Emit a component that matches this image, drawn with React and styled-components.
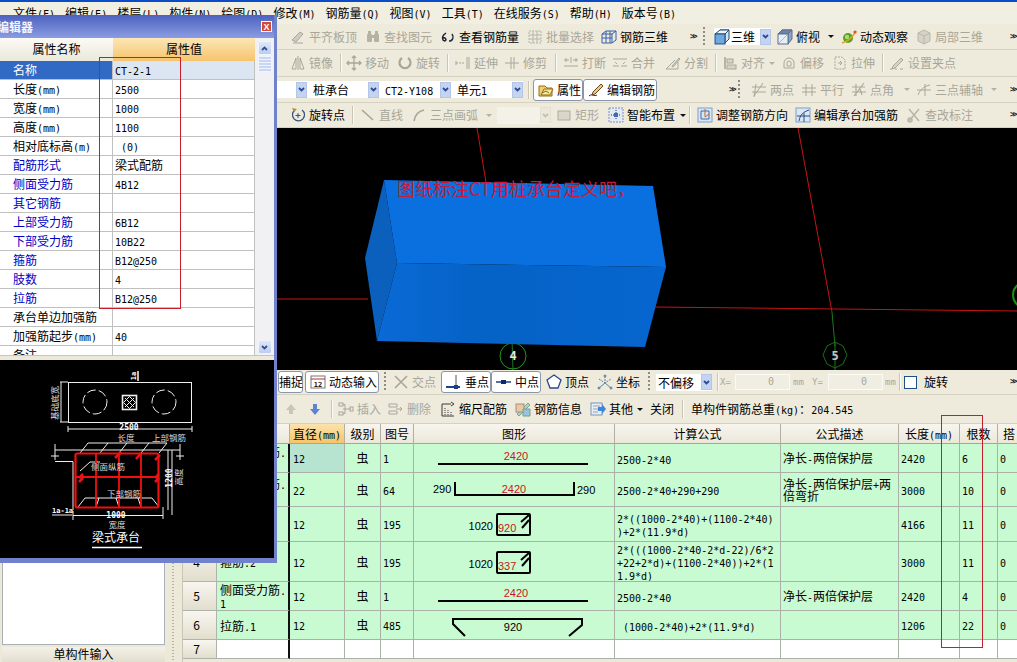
import React from "react";
import styled, { createGlobalStyle } from "styled-components";

const CJK = `"Noto Sans CJK SC", "Noto Sans", sans-serif`;
const MONO = `"DejaVu Sans Mono", "Liberation Mono", monospace`;

const Global = createGlobalStyle`
  html, body { margin: 0; padding: 0; background: #ece9d8; }
  body { font-family: ${CJK}; font-size: 12px; color: #000; }
`;

const Lat = styled.span`font-family: ${MONO}; font-size: 10px; line-height: 1;`;
const T = ({ s }) => String(s).split(/([\x00-\x7f]+)/).map((p, i) => (i % 2 ? <Lat key={i}>{p}</Lat> : p));

const Page = styled.div`
  position: relative; width: 1017px; height: 662px; overflow: hidden;
  background: #ece9d8; display: flex; flex-direction: column;
`;
const BlueStrip = styled.div`height: 2px; background: #0a4cc8; flex: none;`;
const MenuBar = styled.div`
  height: 22px; display: flex; align-items: center; gap: 10px; padding-left: 13px;
  background: #f1eee2; line-height: 22px; flex: none;
`;
const RowBox = styled.div`
  height: ${p => p.$h}px; flex: none; display: flex; align-items: center; white-space: nowrap;
  padding-left: ${p => p.$pad}px; background: #eeebdd; border-bottom: 1px solid #d6d2c2; box-sizing: border-box;
  line-height: 16px; overflow: hidden;
`;
const Slot = styled.div`
  flex: none; width: ${p => p.$w}px; height: 100%; display: flex; align-items: center;
`;
const ItemBox = styled.div`
  display: flex; align-items: center; gap: 3px; color: ${p => (p.$dim ? "#a9a698" : "#000")};
`;
const IconBox = styled.svg`width: 16px; height: 16px; flex: none; display: block;`;
const SepLine = styled.div`width: 1px; height: 18px; background: #c9c5b4; border-right: 1px solid #fbfaf4;`;
const ChevMark = styled.span`font-family: ${MONO}; font-size: 8px; font-weight: 700; letter-spacing: -2px; color: #222;`;
const GripMark = styled.div`
  width: 2px; height: 20px;
  background: repeating-linear-gradient(to bottom, #8f8c7d 0 2px, transparent 2px 4px);
`;
const CaretMark = styled.div`
  width: 0; height: 0; border-left: 3px solid transparent; border-right: 3px solid transparent;
  border-top: 3px solid ${p => (p.$dim ? "#b5b2a4" : "#111")};
`;
const ComboBox = styled.div`
  width: ${p => p.$w}px; height: 17px; background: ${p => (p.$dim ? "#f3f1e8" : "#fff")};
  display: flex; align-items: center; justify-content: space-between; padding-left: ${p => p.$pad ?? 6}px;
  box-sizing: border-box; line-height: 17px;
`;
const ComboArrow = styled.div`
  width: 11px; height: 16px; flex: none; display: flex; align-items: center; justify-content: center;
  background: ${p => (p.$dim ? "#ebe8da" : "#c3d3f0")}; border: 1px solid ${p => (p.$dim ? "#e3e0d2" : "#b3c6ea")};
  box-sizing: border-box;
  color: ${p => (p.$dim ? "#c4c1b2" : "#2a4c96")};
`;
const TogBtn = styled.div`
  width: ${p => p.$w}px; height: 22px; box-sizing: border-box; background: #fff; border: 1px solid #8a96a8;
  border-radius: 3px; display: flex; align-items: center; padding-left: 4px; gap: 3px;
`;
const SpinBox = styled.div`
  width: 55px; height: 16px; box-sizing: border-box; background: #f0eee2; border: 1px solid #fbfaf4;
  display: flex; align-items: center; justify-content: flex-end; color: #aca899; padding-right: 15px;
`;
const SmallDim = styled.span`font-family: ${MONO}; font-size: 9px; color: #a9a698;`;
const CheckBox = styled.div`width: 13px; height: 13px; box-sizing: border-box; border: 1px solid #1f4f80; background: #fff;`;
const TightLabel = styled.span`margin-left: ${p => p.$ml}px;`;

const Chevron = () => (
  <svg width="7" height="5" viewBox="0 0 7 5"><path d="M1 1l2.5 2.5L6 1" fill="none" stroke="currentColor" strokeWidth="1.8" /></svg>
);

const ic = {
  flush: <g stroke="#aaa79a" fill="#cfccc0"><path d="M2 11l8-8 3 2-7 8z" /><path d="M3 14h10" fill="none" /></g>,
  binoc: <g fill="#b5b2a4"><rect x="2" y="5" width="5" height="8" rx="1" /><rect x="9" y="5" width="5" height="8" rx="1" /><rect x="6" y="6" width="4" height="3" /><rect x="3" y="2" width="3" height="3" /><rect x="10" y="2" width="3" height="3" /></g>,
  view: <g fill="none" stroke="#223" strokeWidth="1.5"><path d="M6 4C3 6 2 9 3 11c2 2 4 0 2-2-1-.6-2 0-2.6 1" /><path d="M12 5c2 3 1 7-3 7" stroke="#234" /></g>,
  batch: <g fill="none" stroke="#b6b4a8"><rect x="2" y="2" width="12" height="12" strokeDasharray="2 1" /><path d="M2 6h12M2 10h12M6 2v12M10 2v12" /></g>,
  rebar3d: <g fill="none" stroke="#3560a8"><path d="M1 5l4-3h10v9l-4 3H1z" /><path d="M1 9h10M5 2v12M9 2v12M11 5v9M1 5h10l4-3" /></g>,
  cube: <g stroke="#1e4a78"><path d="M6 1h9v9l-4 4V5z" fill="#d8e6f6" /><path d="M1 5l5-4h9l-4 4z" fill="#eef4fb" /><rect x="1" y="5" width="10" height="10" fill="#6ea8dc" /></g>,
  cubeT: <g stroke="#5a6c8c"><path d="M5 1h10v9l-4 5V5z" fill="#8da4c6" /><path d="M1 5l4-4h10l-4 4z" fill="#6d84aa" /><rect x="1" y="5" width="10" height="10" fill="#e6eff8" /><path d="M2 14l8-8" stroke="#9db8d8" /></g>,
  orbit: <g><circle cx="7" cy="9" r="5" fill="#5aa02c" /><circle cx="6" cy="8" r="2.2" fill="#a9dc6a" /><path d="M1 14C6 13 12 8 15 2" fill="none" stroke="#d9a520" strokeWidth="1.6" /><circle cx="14" cy="3" r="1.6" fill="#e8502a" /></g>,
  local3d: <g fill="#d6d3c7" stroke="#bab7a9"><path d="M8 1l6 3v8l-6 3-6-3V4z" /><path d="M2 4l6 3 6-3M8 7v8" fill="none" /></g>,
  mirror: <g fill="none" stroke="#a9a698"><path d="M6 3L2 14h4zM10 3l4 11h-4z" /><path d="M8 1v14" /></g>,
  move: <g fill="none" stroke="#a9a698" strokeWidth="1.3"><path d="M8 1v14M1 8h14M6 3l2-2 2 2M6 13l2 2 2-2M3 6L1 8l2 2M13 6l2 2-2 2" /></g>,
  rotate: <g fill="none" stroke="#a9a698" strokeWidth="2.2"><path d="M5 3a5.5 5.5 0 1 0 6 0" /></g>,
  extend: <g fill="none" stroke="#a9a698"><path d="M1 8h9" strokeDasharray="2 1" /><path d="M12 2v12M14 2v12" /><path d="M1 6v4" /></g>,
  trim: <g fill="none" stroke="#a9a698"><path d="M1 8h14" /><path d="M7 2v12M10 2v12" /></g>,
  cut: <g fill="none" stroke="#a9a698"><path d="M1 5h5M10 5h5M1 11h14" /><path d="M8 2v6" /><path d="M3 3v4M13 3v4" /></g>,
  join: <g fill="none" stroke="#a9a698"><path d="M1 4h14M1 11h6M9 11h6M3 7l2 2M13 7l-2 2" /></g>,
  split: <g fill="none" stroke="#a9a698"><path d="M1 14h12V7M1 14l9-9" /><path d="M8 10l6-7 1 1-6 7-2 1z" fill="#d6d3c7" /></g>,
  align: <g fill="none" stroke="#a9a698"><path d="M3 2v12" strokeWidth="1.6" /><rect x="5" y="4" width="6" height="4" fill="#d6d3c7" /><rect x="5" y="10" width="9" height="4" fill="#d6d3c7" /></g>,
  offset: <g fill="none" stroke="#a9a698"><path d="M3 13V8a5 5 0 0 1 10 0v5z" /><path d="M6 11V8a2 2 0 0 1 4 0v3z" /></g>,
  stretch: <g fill="none" stroke="#a9a698"><path d="M3 2h7l3 3v9H3z" strokeDasharray="2 1" /><path d="M6 8h4M8 10l2-2-2-2" /></g>,
  grip: <g fill="none" stroke="#a9a698"><path d="M1 14h2M6 14h2M11 14h3" /><path d="M4 11l8-8 2 2-8 8-3 1z" fill="#d6d3c7" /></g>,
  attr: <g stroke="#9a6a14"><path d="M1 4h6l2 2h5v8H1z" fill="#f2cf72" /><path d="M3 13l3-6h9l-3 6z" fill="#fbe69a" /><path d="M4 11l4-2 3 2" fill="none" stroke="#5a7a2a" /></g>,
  pencil: <g><path d="M1 14c3-3 5 1 8-1" fill="none" stroke="#333" /><path d="M5 10l8-8 2 2-8 8-3 1z" fill="#e8c88a" stroke="#6a4a1a" /></g>,
  two: <g fill="none" stroke="#a9a698"><path d="M1 5h14M1 10h14M5 2l-2 13M12 1L3 14" /></g>,
  para: <g fill="none" stroke="#a9a698"><path d="M1 6h14M1 10h14M5 2v12M11 2v12" /></g>,
  angle: <g fill="none" stroke="#a9a698"><path d="M1 5h13M1 10h14M5 2v12M13 1L3 14M9 7l2 6" strokeWidth="1.1" /></g>,
  axis3: <g fill="none" stroke="#a9a698"><path d="M2 13C4 8 8 4 14 3" /><path d="M1 8h14M9 2v12" /></g>,
  rotPt: <g fill="none"><path d="M5 3a6 6 0 1 0 7 0" stroke="#32507c" strokeWidth="1.2" /><path d="M8 6v5M5.5 8.5h5" stroke="#32507c" /><path d="M2 1l5 1-3 3z" fill="#b08f4c" /></g>,
  line: <g fill="none" stroke="#a9a698" strokeWidth="1.6"><path d="M2 3l11 10" /></g>,
  arc: <g fill="none" stroke="#a9a698" strokeWidth="1.6"><path d="M3 14C4 8 8 4 13 3" /></g>,
  rect: <rect x="2" y="4" width="12" height="9" fill="#dad7ca" stroke="#b0ad9f" />,
  smart: <g><rect x="1" y="1" width="14" height="14" fill="#e3eaf5" stroke="#7d90b4" strokeDasharray="2 1" /><path d="M8 3v10M3 8h10" stroke="#1f3f7f" strokeDasharray="1 1" /><rect x="6" y="6" width="4" height="4" fill="#406cb0" /></g>,
  dir: <g><rect x="1" y="1" width="14" height="14" fill="#d8e6f4" stroke="#7fa0c8" /><path d="M4 4h8v8H4z" fill="none" stroke="#3c6ca8" /><path d="M8 2v8l4-3" fill="none" stroke="#c06a2a" /></g>,
  cap: <g><rect x="1" y="1" width="14" height="14" fill="#dbe7f5" stroke="#7fa0c8" /><path d="M14 3C8 5 5 8 4 14M2 9h13M9 6v9" fill="none" stroke="#2c4c80" /></g>,
  fix: <g fill="none" stroke="#b9b6a8" strokeWidth="1.6"><path d="M3 2l10 12M13 2L3 14" /><circle cx="4" cy="13" r="2" /></g>,
  dyn: <g><rect x="1" y="2" width="14" height="12" fill="#fff" stroke="#777" /><path d="M1 5h14" stroke="#a33" /><text x="8" y="12.5" fontSize="7" fontFamily={MONO} fontWeight="700" textAnchor="middle" fill="#222">12</text></g>,
  cross: <g fill="none" stroke="#a9a698" strokeWidth="1.6"><path d="M2 2l12 12M14 2L2 14" /></g>,
  perp: <g><path d="M0 13h14" stroke="#1d3f8c" strokeWidth="2" /><path d="M10 1v12" stroke="#555" /><rect x="8" y="11" width="4" height="4" fill="#1d3f8c" /></g>,
  mid: <g><path d="M0 8h15" stroke="#1d3f8c" strokeWidth="1.5" /><rect x="5" y="6" width="5" height="4" fill="#0d2a6c" /></g>,
  vert: <path d="M8 1l7 5-3 8H4L1 6z" fill="#fff" stroke="#2a4a8c" strokeWidth="1.3" />,
  coord: <g fill="none" stroke="#5a80a8"><path d="M2 14l6-5 6 5" /><path d="M8 2v7M2 5l6 4 6-4" strokeDasharray="2 1" /><circle cx="8" cy="2" r="1" fill="#cfa13a" /><circle cx="2" cy="14" r="1" fill="#cfa13a" /><circle cx="14" cy="14" r="1" fill="#cfa13a" /></g>,
  up: <path d="M8 3l5 6h-3v4H6V9H3z" fill="#c9c6b8" />,
  down: <path d="M6 3h4v5h3l-5 6-5-6h3z" fill="#5e84d0" />,
  ins: <g fill="none" stroke="#a9a698"><rect x="1" y="2" width="4" height="3" /><rect x="1" y="11" width="4" height="3" /><path d="M5 8h8M5 3.5h2v9H5" /><rect x="12" y="6" width="3" height="4" /></g>,
  del: <g fill="none" stroke="#a9a698"><path d="M1 3h8v3H1zM1 10h8v3H1zM8 8h6M12 6l2 2-2 2" /></g>,
  scale: <g fill="none" stroke="#3a3a3a"><path d="M2 3v12h12" /><path d="M5 7v7M8 9v5M11 11v3" strokeDasharray="1 1" /><path d="M2 3h9" /><path d="M11 1l3 2-3 2" /></g>,
  info: <g><path d="M2 13L13 2l2 2L4 15z" fill="#b9c9de" stroke="#7a7" /><rect x="1" y="3" width="8" height="8" fill="#e8c9a0" stroke="#a88" /><path d="M8 8h7v7H8z" fill="#9cc0e2" stroke="#6a8" /></g>,
  other: <g><rect x="1" y="2" width="11" height="12" fill="#e8eef7" stroke="#7b93b8" /><path d="M3 5h7M3 8h5M3 11h5" stroke="#8aa" /><path d="M8 6h4V3l4 5-4 5v-3H8z" fill="#3f86d8" /></g>
};

const Icon = ({ n }) => <IconBox viewBox="0 0 16 16">{ic[n]}</IconBox>;

const I = (n, label, dim) => (
  <ItemBox $dim={dim}>
    <Icon n={n} />
    <span><T s={label} /></span>
  </ItemBox>
);
const Sep = <SepLine />;
const Chev = <ChevMark>{">>"}</ChevMark>;
const Grip = <GripMark />;
const Caret = <CaretMark />;
const CaretD = <CaretMark $dim />;
const Combo = (w, txt, dim, pad) => (
  <ComboBox $w={w} $dim={dim} $pad={pad}>
    <span><T s={txt} /></span>
    <ComboArrow $dim={dim}><Chevron /></ComboArrow>
  </ComboBox>
);
const Btn = (w, n, label) => (
  <TogBtn $w={w}><Icon n={n} /><span>{label}</span></TogBtn>
);

const Row = ({ h, origin = 0, items }) => (
  <RowBox $h={h} $pad={items[0][0] - origin}>
    {items.map(([x, node], i) => (
      <Slot key={i} $w={i < items.length - 1 ? items[i + 1][0] - x : 30}>{node}</Slot>
    ))}
  </RowBox>
);

const row1 = [
  [290, I("flush", "平齐板顶", 1)], [365, I("binoc", "查找图元", 1)], [440, I("view", "查看钢筋量")],
  [527, I("batch", "批量选择", 1)], [601, I("rebar3d", "钢筋三维")], [690, Chev], [703, Grip],
  [714, <ComboBox $w={57} $pad={0}><ItemBox><Icon n="cube" /><TightLabel $ml={-2}>三维</TightLabel></ItemBox><ComboArrow><Chevron /></ComboArrow></ComboBox>],
  [777, I("cubeT", "俯视")], [828, Caret], [841, I("orbit", "动态观察")], [916, I("local3d", "局部三维", 1)], [1010, Chev]
];
const row2 = [
  [290, I("mirror", "镜像", 1)], [340, Sep], [346, I("move", "移动", 1)], [397, I("rotate", "旋转", 1)], [447, Sep],
  [455, I("extend", "延伸", 1)], [504, I("trim", "修剪", 1)], [555, Sep], [563, I("cut", "打断", 1)], [612, I("join", "合并", 1)],
  [665, I("split", "分割", 1)], [715, Sep], [722, I("align", "对齐", 1)], [769, CaretD], [781, I("offset", "偏移", 1)],
  [832, I("stretch", "拉伸", 1)], [882, Sep], [889, I("grip", "设置夹点", 1)]
];
const row3 = [
  [240, Combo(67, "", 0)], [307, Combo(72, "桩承台", 0)], [379, Combo(72, "CT2-Y108", 0)], [451, Combo(72, "单元1", 0)],
  [528, Sep], [533, Btn(50, "attr", "属性")], [583, Btn(74, "pencil", "编辑钢筋")], [729, Chev], [738, Grip],
  [751, I("two", "两点", 1)], [801, I("para", "平行", 1)], [851, I("angle", "点角", 1)], [904, CaretD],
  [916, I("axis3", "三点辅轴", 1)], [991, CaretD], [1010, Chev]
];
const row4 = [
  [290, I("rotPt", "旋转点")], [352, Sep], [360, I("line", "直线", 1)], [411, I("arc", "三点画弧", 1)], [486, CaretD],
  [497, Combo(54, "", 1)], [556, I("rect", "矩形", 1)], [608, I("smart", "智能布置")], [680, Caret], [689, Sep],
  [697, I("dir", "调整钢筋方向")], [795, I("cap", "编辑承台加强筋")], [906, I("fix", "查改标注", 1)], [1010, Chev]
];
const row5 = [
  [278, <TogBtn $w={25}><TightLabel $ml={-4}>捕捉</TightLabel></TogBtn>], [305, Btn(74, "dyn", "动态输入")], [384, Grip],
  [393, I("cross", "交点", 1)], [441, Btn(50, "perp", "垂点")], [491, Btn(50, "mid", "中点")], [546, I("vert", "顶点")], [597, I("coord", "坐标")],
  [648, Grip], [656, Combo(56, "不偏移", 0, 2)], [717, Sep], [720, <SmallDim>X=</SmallDim>],
  [735, <SpinBox><Lat>0</Lat></SpinBox>], [793, <SmallDim>mm</SmallDim>], [812, <SmallDim>Y=</SmallDim>],
  [828, <SpinBox><Lat>0</Lat></SpinBox>], [885, <SmallDim>mm</SmallDim>], [899, Sep], [904, <CheckBox />],
  [924, <span>旋转</span>], [1010, Chev]
];
const row6 = [
  [283, <Icon n="up" />], [307, <Icon n="down" />], [331, Sep], [338, I("ins", "插入", 1)], [388, I("del", "删除", 1)],
  [440, I("scale", "缩尺配筋")], [515, I("info", "钢筋信息")], [590, I("other", "其他")], [637, Caret],
  [650, <span>关闭</span>], [682, Sep], [691, <span><T s="单构件钢筋总重(kg)：204.545" /></span>]
];

const Body = styled.div`flex: 1; min-height: 0; display: grid; grid-template-columns: 165px 18px 834px; overflow: hidden;`;
const LeftCol = styled.div`display: flex; flex-direction: column; gap: 2px; padding-left: 2px; box-sizing: border-box; height: 534px;`;
const LeftWhite = styled.div`flex: 1; background: #fff; border: 1px solid #a9b0ba;`;
const LeftButton = styled.div`
  height: 15px; flex: none; text-align: center; line-height: 14px; overflow: hidden; box-sizing: border-box;
  background: linear-gradient(#f3f1e8, #e3dfcf);
`;
const Splitter = styled.div`
  position: relative; background: #ece9d8;
  background-image: repeating-linear-gradient(to bottom, #b6b3a4 0 1px, transparent 1px 3px);
  background-size: 2px 100%; background-repeat: no-repeat; background-position: 7px 0;
  border-right: 1px solid #c8c5b6;
`;
const RightCol = styled.div`display: flex; flex-direction: column; min-width: 0;`;
const ViewPort = styled.div`position: relative; height: 242px; flex: none; background: #000; overflow: hidden;`;
const SceneSvg = styled.svg`display: block; width: 834px; height: 242px;`;
const SceneNote = styled.div`
  position: absolute; left: 214px; top: 49px; font-size: 18px; line-height: 22px; color: #c81a3c; white-space: nowrap;
`;

const Grid = styled.table`
  table-layout: fixed; border-collapse: separate; border-spacing: 0; width: 855px; background: #fff;
`;
const Th = styled.th`
  height: 20px; box-sizing: border-box; padding: 0 0 0 ${p => p.$pl ?? 0}px; font-weight: 400; line-height: 18px;
  text-align: ${p => (p.$pl ? "left" : "center")};
  white-space: nowrap; overflow: hidden;
  border-right: 1px solid #b2b0a4; border-bottom: 1px solid #a8a69a;
  background: ${p => (p.$active ? "linear-gradient(#fbe3ae, #f6c468)" : "linear-gradient(#f7f5ee, #ebe8da)")};
`;
const RowHead = styled.td`
  box-sizing: border-box; padding: 0 6px 0 0; text-align: center; height: ${p => p.$h}px; line-height: 14px;
  background: linear-gradient(#f8f6ef, #e2dece); border-right: 1px solid #aeb3ab; border-bottom: 1px solid #aeb3ab;
`;
const Cell = styled.td`
  box-sizing: border-box; height: ${p => p.$h}px; padding: 0 0 0 ${p => p.$pad ?? 3}px; overflow: hidden;
  white-space: nowrap; vertical-align: middle; line-height: 14px;
  text-align: ${p => p.$align ?? "left"};
  background: ${p => (p.$sel ? "#b7e4d0" : p.$empty ? "#fff" : "#c9fbd2")};
  border-right: ${p => (p.$frozen ? "2px solid #111" : "1px solid #a9b1a9")};
  border-bottom: 1px solid #a9b1a9;
`;
const CellLine = styled.div`height: ${p => p.$lh}px; line-height: ${p => p.$lh}px; white-space: pre;`;
const ShapeSvg = styled.svg`display: block; width: 201px;`;

const Red = "#c8141e";
const txt = { fontFamily: `"Liberation Sans", sans-serif`, fontSize: 11 };
const LineShape = ({ h, y }) => (
  <ShapeSvg viewBox={`0 0 201 ${h}`} height={h}>
    <path d={`M24 ${y}H174`} stroke="#000" strokeWidth="2" />
    <text x="102" y={y - 4} textAnchor="middle" fill={Red} style={txt}>2420</text>
  </ShapeSvg>
);
const BracketShape = () => (
  <ShapeSvg viewBox="0 0 201 33" height={33}>
    <path d="M41 9V22H160V9" fill="none" stroke="#000" strokeWidth="2" />
    <text x="19" y="20" fill="#000" style={txt}>290</text>
    <text x="163" y="21" fill="#000" style={txt}>290</text>
    <text x="100" y="20" textAnchor="middle" fill={Red} style={txt}>2420</text>
  </ShapeSvg>
);
const StirrupShape = ({ h, top, n }) => (
  <ShapeSvg viewBox={`0 0 201 ${h}`} height={h}>
    <rect x="83" y={top} width="33" height="21" rx="1" fill="none" stroke="#000" strokeWidth="2" />
    <path d={`M107 ${top + 8}l8-7M108 ${top + 14}l7-8`} stroke="#000" strokeWidth="2" />
    <text x="79" y={top + 16} textAnchor="end" fill="#000" style={txt}>1020</text>
    <text x="84" y={top + 18} fill={Red} style={txt}>{n}</text>
  </ShapeSvg>
);
const HookShape = () => (
  <ShapeSvg viewBox="0 0 201 28" height={28}>
    <path d="M51 25L39 13V8H168V14L155 25" fill="none" stroke="#000" strokeWidth="2" />
    <text x="99" y="20" textAnchor="middle" fill="#000" style={txt}>920</text>
  </ShapeSvg>
);

const rows = [
  { h: 29, n: "1", name: ["上部受力筋.", "1"], d: "12", fig: "1", shape: <LineShape h={28} y={20} />, f: ["2500-2*40"], desc: ["净长-两倍保护层"], len: "2420", cnt: "6" },
  { h: 34, n: "2", name: ["下部受力筋.", "1"], d: "22", fig: "64", shape: <BracketShape />, f: ["2500-2*40+290+290"], desc: ["净长-两倍保护层+两", "倍弯折"], len: "3000", cnt: "10" },
  { h: 35, n: "3", name: ["箍筋.1"], d: "12", fig: "195", shape: <StirrupShape h={34} top={7} n="920" />, f: ["2*((1000-2*40)+(1100-2*40)", ")+2*(11.9*d)"], desc: [""], len: "4166", cnt: "11" },
  { h: 40, n: "4", name: ["箍筋.2"], d: "12", fig: "195", shape: <StirrupShape h={39} top={10} n="337" />, f: ["2*(((1000-2*40-2*d-22)/6*2", "+22+2*d)+(1100-2*40))+2*(1", "1.9*d)"], desc: [""], len: "3000", cnt: "11" },
  { h: 29, n: "5", name: ["侧面受力筋.", "1"], d: "12", fig: "1", shape: <LineShape h={28} y={19} />, f: ["2500-2*40"], desc: ["净长-两倍保护层"], len: "2420", cnt: "4" },
  { h: 29, n: "6", name: ["拉筋.1"], d: "12", fig: "485", shape: <HookShape />, f: [" (1000-2*40)+2*(11.9*d)"], desc: [""], len: "1206", cnt: "22" }
];
const Lines = ({ l, lh }) => l.map((s, i) => <CellLine key={i} $lh={lh}><T s={s} /></CellLine>);

const Heads = ["", "", "直径(mm)", "级别", "图号", "图形", "计算公式", "公式描述", "长度(mm)", "根数", "搭"];
const colW = [34, 73, 55, 36, 33, 201, 166, 118, 61, 38, 40];

const RebarTable = () => (
  <Grid>
    <colgroup>{colW.map((w, i) => <col key={i} style={{ width: w }} />)}</colgroup>
    <thead>
      <tr>{Heads.map((h, i) => <Th key={i} $active={i === 2} $pl={i === 10 ? 5 : 0}><T s={h} /></Th>)}</tr>
    </thead>
    <tbody>
      {rows.map((r, i) => (
        <tr key={r.n}>
          <RowHead $h={r.h}>{r.n}</RowHead>
          <Cell $h={r.h} $frozen><Lines l={r.name} lh={13} /></Cell>
          <Cell $h={r.h} $sel={i === 0}><T s={r.d} /></Cell>
          <Cell $h={r.h} $align="center" $pad={0}>虫</Cell>
          <Cell $h={r.h} $pad={2}><T s={r.fig} /></Cell>
          <Cell $h={r.h} $pad={0}>{r.shape}</Cell>
          <Cell $h={r.h} $pad={2}><Lines l={r.f} lh={13} /></Cell>
          <Cell $h={r.h} $pad={2}><Lines l={r.desc} lh={12} /></Cell>
          <Cell $h={r.h} $pad={2}><T s={r.len} /></Cell>
          <Cell $h={r.h} $pad={2}><T s={r.cnt} /></Cell>
          <Cell $h={r.h} $pad={2}><T s="0" /></Cell>
        </tr>
      ))}
      <tr>
        <RowHead $h={19}>7</RowHead>
        <Cell $h={19} $frozen $empty />
        {colW.slice(2).map((_, i) => <Cell key={i} $h={19} $empty />)}
      </tr>
    </tbody>
  </Grid>
);

/* floating property window */
const Dialog = styled.div`
  position: absolute; left: 0; top: 15px; width: 277px; height: 548px; overflow: hidden; z-index: 5;
  display: flex; flex-direction: column; background: #7182cc; box-sizing: border-box; padding-right: 3px; padding-bottom: 5px;
`;
const DialogTitle = styled.div`
  height: 23px; flex: none; display: flex; align-items: center; justify-content: space-between;
  background: linear-gradient(#4c62bf, #8b9ce2); color: #fff; font-weight: 700; line-height: 23px; padding-right: 2px;
`;
const TitleText = styled.span`margin-left: -27px; white-space: nowrap; opacity: .92;`;
const CloseBtn = styled.div`
  width: 11px; height: 11px; background: #d24a3a; border: 1px solid #fff; color: #fff; font: 700 9px/10px "Liberation Sans", sans-serif;
  text-align: center; box-sizing: border-box;
`;
const PropArea = styled.div`
  height: 317px; flex: none; display: grid; grid-template-columns: 255px 19px; background: #fff; overflow: hidden;
`;
const PropGrid = styled.div`
  display: grid; grid-template-columns: 113px 142px; grid-template-rows: 23px; grid-auto-rows: 19px; align-content: start; overflow: hidden;
`;
const PropHead = styled.div`
  text-align: center; line-height: 22px; box-sizing: border-box;
  background: ${p => (p.$active ? "linear-gradient(#fbe6b8, #f6c46c)" : "linear-gradient(#fbfaf5, #ebe8da)")};
`;
const PropName = styled.div`
  box-sizing: border-box; padding-left: 13px; line-height: 18px; white-space: nowrap; overflow: hidden;
  color: ${p => (p.$sel ? "#fff" : p.$link ? "#0000c4" : "#000")};
  background: ${p => (p.$sel ? "#316ac5" : "#fff")};
  border-bottom: 1px solid #c0c0c0; border-right: 1px solid #c0c0c0;
`;
const PropValue = styled.div`
  box-sizing: border-box; padding-left: 2px; line-height: 18px; white-space: pre; overflow: hidden;
  background: ${p => (p.$sel ? "#dce6f3" : "#fff")};
  border-bottom: 1px solid #c0c0c0; border-right: 1px solid #c0c0c0;
`;
const ScrollTrack = styled.div`
  background: #f1f0f3; display: flex; flex-direction: column; align-items: center; padding-top: 3px; box-sizing: border-box; height: 317px;
`;
const ScrollBtn = styled.div`
  width: 14px; height: 14px; flex: none; border-radius: 2px; background: linear-gradient(#dfe7f8, #bccdf0); border: 1px solid #eef3fc;
  box-sizing: border-box; display: flex; align-items: center; justify-content: center; color: #34508c;
  margin-top: ${p => (p.$push ? "auto" : 0)}; margin-bottom: ${p => (p.$push ? "1px" : 0)};
  & svg { transform: ${p => (p.$up ? "rotate(180deg)" : "none")}; }
`;
const ScrollThumb = styled.div`
  width: 14px; height: 17px; flex: none; box-sizing: border-box; margin-top: 1px; border-radius: 2px;
  border: 1px solid #eef3fc;
  background: repeating-linear-gradient(to bottom, #c8d6f4 0 2px, #eef3fc 2px 3px);
`;
const Bevel = styled.div`height: 5px; flex: none; background: #ece9d8; border-top: 1px solid #c8c6ba; box-sizing: border-box;`;
const DiagramBox = styled.div`height: 198px; flex: none; background: #000;`;
const DiagramSvg = styled.svg`display: block; width: 274px; height: 198px;`;

const props = [
  ["名称", "CT-2-1", 0, 1], ["长度(mm)", "2500"], ["宽度(mm)", "1000"], ["高度(mm)", "1100"], ["相对底标高(m)", " (0)"],
  ["配筋形式", "梁式配筋", 1], ["侧面受力筋", "4B12", 1], ["其它钢筋", "", 1], ["上部受力筋", "6B12", 1], ["下部受力筋", "10B22", 1],
  ["箍筋", "B12@250", 1], ["肢数", "4", 1], ["拉筋", "B12@250", 1], ["承台单边加强筋", ""], ["加强筋起步(mm)", "40"], ["备注", ""]
];

const dt = { fontFamily: CJK, fontSize: 8.5 };
const dn = (size) => ({ fontFamily: MONO, fontSize: size });
const Diagram = () => (
  <DiagramSvg viewBox="0 360 274 198">
    <g fill="none" stroke="#eee" strokeWidth="1">
      <rect x="68.5" y="382.5" width="123" height="40" />
      <circle cx="95" cy="402" r="12" strokeDasharray="9 3" />
      <circle cx="164" cy="402" r="12" strokeDasharray="9 3" />
      <rect x="122.5" y="395.500" width="14" height="14" strokeWidth="1.6" />
      <path d="M125 398l9 9M134 398l-9 9M129.5 396.5l6 6-6 6-6-6z" />
      <path d="M60 382h8M60 422h8M61 382v40M68 429h124M68 426v6M192 426v6" />
      <path d="M138 371v10" strokeWidth="1.6" />
      <path d="M88 443h79M55 450h125M80 453l8-10M100 453l8-10M119 453l8-10M141 453l8-10M159 453l8-10" />
      <path d="M55 444v16M180 444v16M51 456h8M176 456h8M55 461.5h18V510M168 450v60M172 450v65" />
      <path d="M78 507l7-9h67l7 9M96 507l3-9M119 507l-3-9M141 507l-3-9" />
      <path d="M73 515.500h90M73 511v9M163 507v12M52 515h20" />
      <path d="M80 471l10-9h10" />
    </g>
    <g fill="none" stroke="#f01010">
      <rect x="75.500" y="453.500" width="83" height="54" rx="2" strokeWidth="2.2" />
      <path d="M96 454v53M119 454v53M141 454v53M76 477h83" strokeWidth="1.8" />
      <path d="M115 458l6-6M136 459l5-6M155 460l5-5M79 482l4-4M155 482l4-4M79 478l4-4M155 478l4-4" strokeWidth="2.6" />
    </g>
    <g fill="#d8d8d8" style={dt} textAnchor="middle">
      <text x="129" y="430" fontWeight="700" fill="#fff" style={dn(8)}>2500</text>
      <text x="126" y="441">长度</text>
      <text x="169" y="441">上部钢筋</text>
      <text x="108" y="470">侧面纵筋</text>
      <text x="124" y="497">下部钢筋</text>
      <text x="116" y="518" fontWeight="700" fill="#fff" style={dn(8)}>1000</text>
      <text x="117" y="528">宽度</text>
      <text x="52" y="513" fontWeight="700" fill="#fff" style={dn(7)} textAnchor="start">1a-1a</text>
      <text transform="translate(172 478) rotate(-90)" fontWeight="700" fill="#fff" style={dn(8)}>1200</text>
      <text transform="translate(182 477) rotate(-90)">高度</text>
      <text transform="translate(58 403) rotate(-90)">基础底宽</text>
      <text transform="translate(136 376) rotate(-90)" fontWeight="700" fill="#fff" style={dn(7)}>1a</text>
    </g>
    <text x="116" y="542" textAnchor="middle" fill="#fff" style={{ fontFamily: CJK, fontSize: 12 }}>梁式承台</text>
    <path d="M92 547.500h50" stroke="#fff" strokeWidth="1.6" />
  </DiagramSvg>
);

const Mark = styled.div`
  position: absolute; left: ${p => p.$l}px; top: ${p => p.$t}px; width: ${p => p.$w}px; height: ${p => p.$h}px;
  box-sizing: border-box; border: 1px solid #c4202c; z-index: 9; pointer-events: none;
`;

const Scene = () => (
  <ViewPort>
    <SceneSvg viewBox="183 128 834 242">
      <defs>
        <linearGradient id="lower" x1="0" x2="1"><stop offset="0" stopColor="#0a6ad6" /><stop offset=".35" stopColor="#0562c6" /><stop offset="1" stopColor="#0666cf" /></linearGradient>
      </defs>
      <g fill="none" strokeWidth="1">
        <path d="M477 128l9 54M183 299H368M655 307L1017 311M798 128L832 312" stroke="#c81414" />
        <path d="M832 312l3 34M512 340l1 30M835 342v28" stroke="#1a7a1a" />
        <circle cx="513" cy="356" r="13" stroke="#1f9a1f" />
        <path d="M835 342l8 4 4 9-4 9-8 4-8-4-4-9 4-9z" stroke="#1a701a" />
        <circle cx="1026" cy="295" r="13" stroke="#1a901a" strokeWidth="2" />
      </g>
      <polygon points="384,180 397,263 377,341 365,258" fill="#0a60bc" />
      <polygon points="384,180 653,186 666,267 397,263" fill="#0a70e0" />
      <polygon points="397,263 666,267 645,347 377,341" fill="url(#lower)" />
      <text x="513" y="360" textAnchor="middle" fill="#e8e8e8" fontWeight="700" style={dn(12)}>4</text>
      <text x="835" y="360" textAnchor="middle" fill="#c8c8c8" fontWeight="700" style={dn(12)}>5</text>
    </SceneSvg>
    <SceneNote>图纸标注CT用桩承台定义吧，</SceneNote>
  </ViewPort>
);

export default function App() {
  return (
    <Page>
      <Global />
      <BlueStrip />
      <MenuBar>
        {["文件(F)", "编辑(E)", "楼层(L)", "构件(N)", "绘图(D)", "修改(M)", "钢筋量(Q)", "视图(V)", "工具(T)", "在线服务(S)", "帮助(H)", "版本号(B)"].map(m => (
          <span key={m}><T s={m} /></span>
        ))}
      </MenuBar>
      <Row h={26} items={row1} />
      <Row h={27} items={row2} />
      <Row h={26} items={row3} />
      <Row h={25} items={row4} />
      <Body>
        <LeftCol>
          <LeftWhite />
          <LeftButton>单构件输入</LeftButton>
        </LeftCol>
        <Splitter />
        <RightCol>
          <Scene />
          <Row h={25} origin={183} items={row5} />
          <Row h={29} origin={183} items={row6} />
          <RebarTable />
        </RightCol>
      </Body>

      <Dialog>
        <DialogTitle>
          <TitleText>属性编辑器</TitleText>
          <CloseBtn>X</CloseBtn>
        </DialogTitle>
        <PropArea>
          <PropGrid>
            <PropHead>属性名称</PropHead>
            <PropHead $active>属性值</PropHead>
            {props.map(([n, v, link, sel]) => (
              <React.Fragment key={n}>
                <PropName $link={link} $sel={sel}><T s={n} /></PropName>
                <PropValue $sel={sel}><T s={v} /></PropValue>
              </React.Fragment>
            ))}
          </PropGrid>
          <ScrollTrack>
            <ScrollBtn $up><Chevron /></ScrollBtn>
            <ScrollThumb />
            <ScrollBtn $push><Chevron /></ScrollBtn>
          </ScrollTrack>
        </PropArea>
        <Bevel />
        <DiagramBox><Diagram /></DiagramBox>
      </Dialog>

      <Mark $l={99} $t={57} $w={82} $h={252} />
      <Mark $l={941} $t={415} $w={42} $h={233} />
    </Page>
  );
}
